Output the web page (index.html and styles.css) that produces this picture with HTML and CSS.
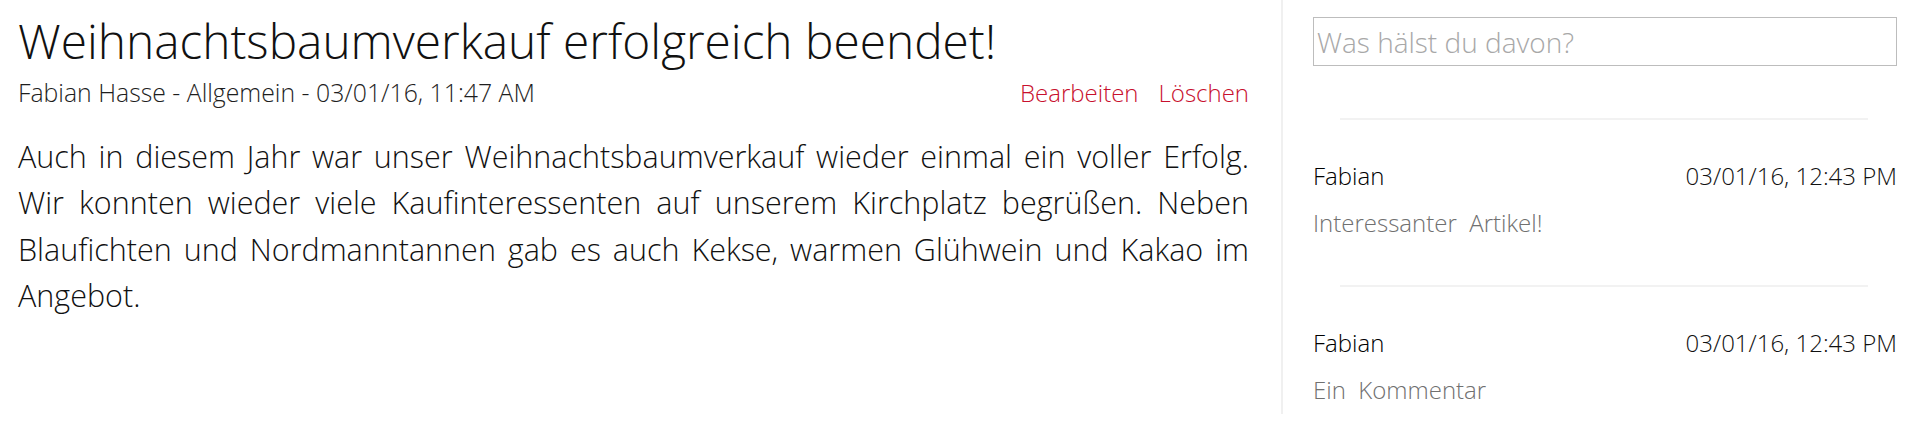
FILE: index.html
```html
<!DOCTYPE html>
<html lang="de">
<head>
<meta charset="utf-8">
<title>Weihnachtsbaumverkauf erfolgreich beendet!</title>
<link rel="stylesheet" href="styles.css">
</head>
<body>
<div class="page">
  <main class="article">
    <h1 class="title">Weihnachtsbaumverkauf erfolgreich beendet!</h1>
    <div class="meta">
      <span class="meta-info">Fabian Hasse - Allgemein - 03/01/16, 11:47 AM</span>
      <span class="actions"><a class="action" href="#">Bearbeiten</a><a class="action" href="#">Löschen</a></span>
    </div>
    <p class="text">Auch in diesem Jahr war unser Weihnachtsbaumverkauf wieder einmal ein voller Erfolg. Wir konnten wieder viele Kaufinteressenten auf unserem Kirchplatz begrüßen. Neben Blaufichten und Nordmanntannen gab es auch Kekse, warmen Glühwein und Kakao im Angebot.</p>
  </main>
  <aside class="sidebar">
    <input class="comment-input" type="text" placeholder="Was hälst du davon?">
    <div class="comment">
      <hr class="sep">
      <div class="comment-head"><span class="author">Fabian</span><span class="date">03/01/16, 12:43 PM</span></div>
      <div class="comment-body">Interessanter&nbsp; Artikel!</div>
    </div>
    <div class="comment">
      <hr class="sep">
      <div class="comment-head"><span class="author">Fabian</span><span class="date">03/01/16, 12:43 PM</span></div>
      <div class="comment-body">Ein&nbsp; Kommentar</div>
    </div>
  </aside>
</div>
</body>
</html>
```

FILE: styles.css
```css
* { box-sizing: border-box; }
html, body { margin: 0; padding: 0; background: #fff; }
body {
  font-family: "Open Sans", "Liberation Sans", sans-serif;
  font-weight: 300;
  color: #111;
}
.page {
  display: grid;
  grid-template-columns: 1281px 1fr;
  align-items: start;
}
.article {
  padding: 0 32px 0 18px;
}
.title {
  margin: 13px 0 0 0;
  font-size: 47.8px;
  line-height: 56px;
  font-weight: 300;
  color: #111;
}
.meta {
  display: flex;
  justify-content: space-between;
  align-items: baseline;
  margin-top: 7px;
  font-size: 24.8px;
  line-height: 32px;
  color: #1e1e1e;
}
.actions {
  display: flex;
  gap: 20px;
  font-size: 24px;
}
.action {
  color: #c8102e;
  text-decoration: none;
}
.text {
  margin: 23.5px 0 0 0;
  font-size: 30.5px;
  line-height: 46.5px;
  word-spacing: 1px;
  text-align: justify;
  color: #111;
}
.sidebar {
  border-left: 2px solid #f0f0f0;
  padding: 17px 23px 8px 30px;
}
.comment-input {
  display: block;
  width: 100%;
  height: 49px;
  margin: 0;
  padding: 0 3px;
  border: 1px solid #bdbdbd;
  border-radius: 0;
  font-family: "Open Sans", sans-serif;
  font-weight: 300;
  font-size: 28px;
  color: #333;
  outline: none;
}
.comment-input::placeholder { color: #a8a8a8; }
.sep {
  margin: 0 29px 0 27px;
  border: 0;
  height: 2px;
  background: #f2f2f2;
}
.comment:first-of-type .sep { margin-top: 52px; }
.comment + .comment .sep { margin-top: 46px; }
.comment-head {
  display: flex;
  justify-content: space-between;
  margin-top: 40px;
  font-size: 24px;
  line-height: 32px;
  color: #000;
}
.date { color: #111; }
.comment-body {
  margin-top: 15px;
  font-size: 24px;
  line-height: 32px;
  color: #707070;
}
```
